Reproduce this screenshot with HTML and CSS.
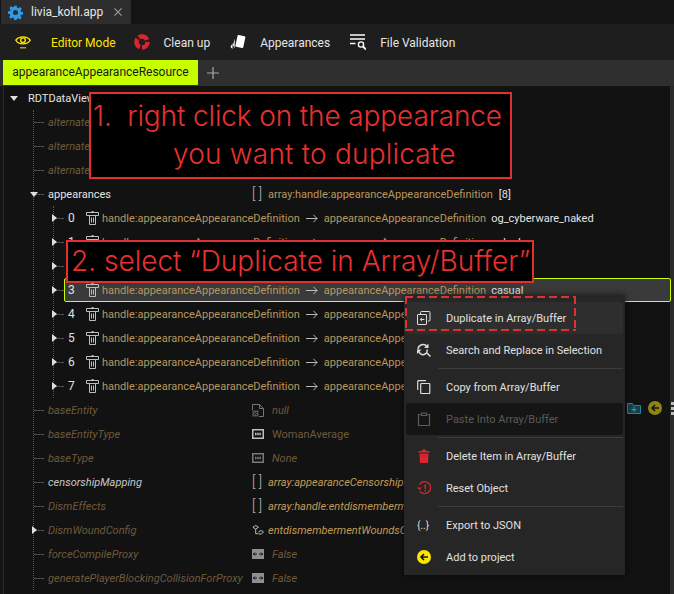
FILE: index.html
```html
<!DOCTYPE html>
<html lang="en">
<head>
  <meta charset="UTF-8" />
  <title>livia_kohl.app</title>
  <link rel="stylesheet" href="styles.css">
</head>
<body>
  <!-- window tab -->
  <div class="titlebar">
    <div class="filetab">
      <svg class="gear" width="15" height="15" viewBox="0 0 24 24"><path fill="#2f9be6" d="M10 1h4l.6 3.2 2 .8L19.300 3.200l2.800 2.800L20.200 8.700l.8 2 3 .3v4l-3.200.6-.8 2 1.800 2.700-2.800 2.800-2.700-1.800-2 .8L14 24h-4l-.6-3.200-2-.8-2.700 1.800-2.800-2.800 1.800-2.700-.8-2L0 14v-4l3.200-.6.8-2L2.200 4.700 5 1.900l2.700 1.800 2-.8zM12 8a4 4 0 1 0 0 8 4 4 0 0 0 0-8z"/></svg>
      <span>livia_kohl.app</span>
      <svg class="close" width="8" height="8" viewBox="0 0 9 9"><path d="M.5.500l8 8M8.500.500l-8 8" stroke="#9a9a9a" stroke-width="1.300"/></svg>
    </div>
  </div>

  <!-- toolbar -->
  <div class="toolbar">
    <div class="tool active">
      <svg width="16" height="16" viewBox="0 0 18 18"><path d="M1 7c3-5 13-5 16 0-3 5.500-13 5.500-16 0z" fill="none" stroke="#ffe600" stroke-width="1.600"/><circle cx="9" cy="7" r="2.600" fill="none" stroke="#ffe600" stroke-width="1.600"/><path d="M6 15.500h1.500M8.300 15.500h1.500M10.600 15.500h1.500" stroke="#ffe600" stroke-width="1.600"/></svg>
      <span>Editor Mode</span>
    </div>
    <div class="tool">
      <svg width="16" height="16" viewBox="0 0 16 16"><circle cx="8" cy="8" r="5.500" fill="none" stroke="#d9262e" stroke-width="4.500" stroke-dasharray="9.500 2.020" stroke-dashoffset="1"/></svg>
      <span>Clean up</span>
    </div>
    <div class="tool">
      <svg width="16" height="16" viewBox="0 0 16 16"><rect x="6.500" y="1.500" width="8" height="12" rx="1" transform="rotate(12 10 7)" fill="#fff"/><path d="M5 4.500L3 11l1.500 3.500zM2.500 9L.5 13l2 2z" fill="#fff"/></svg>
      <span>Appearances</span>
    </div>
    <div class="tool">
      <svg width="16" height="16" viewBox="0 0 16 16"><path d="M0 1h15M0 5h15M0 9.500h5.500" stroke="#fff" stroke-width="1.400"/><circle cx="11" cy="10.500" r="2.600" fill="none" stroke="#fff" stroke-width="1.400"/><path d="M13 12.500l3 3" stroke="#fff" stroke-width="1.800"/></svg>
      <span>File Validation</span>
    </div>
  </div>

  <!-- document tabs -->
  <div class="doctabs">
    <div class="doctab">appearanceAppearanceResource</div>
    <svg class="plus" width="12" height="12" viewBox="0 0 13 13"><path d="M6.500 0v13M0 6.500h13" stroke="#a8a8a8" stroke-width="1.300"/></svg>
  </div>

  <!-- data tree -->
  <div class="tree">
    <div class="row root"><span class="toggle down"></span><span class="name plain upright">RDTDataViewModel</span></div>
    <div class="children">
      <div class="row"><span class="dash"></span><span class="name">alternateAppearance</span></div>
      <div class="row"><span class="dash"></span><span class="name">alternateAppearance</span></div>
      <div class="row"><span class="dash"></span><span class="name">alternateAppearance</span></div>

      <div class="row"><span class="dash"><span class="toggle down"></span></span><span class="name plain upright">appearances</span>
        <span class="value"><span class="brackets">[ ]</span><span class="type upright">array:handle:appearanceAppearanceDefinition</span><span class="count">[8]</span></span>
      </div>
      <div class="children sub">
        <div class="row item"><span class="dash"><span class="toggle"></span></span><span class="idx">0</span><svg class="hicon" width="13" height="15" viewBox="0 0 13 15"><use href="#handle"/></svg><span class="type">handle:appearanceAppearanceDefinition</span><svg class="arrow" width="12" height="9" viewBox="0 0 13 9"><path d="M0 4.500h12M8 .5l4 4-4 4" fill="none" stroke="#c8c8c8"/></svg><span class="type">appearanceAppearanceDefinition</span><span class="label">og_cyberware_naked</span></div>
        <div class="row item"><span class="dash"><span class="toggle"></span></span><span class="idx">1</span><svg class="hicon" width="13" height="15" viewBox="0 0 13 15"><use href="#handle"/></svg><span class="type">handle:appearanceAppearanceDefinition</span><svg class="arrow" width="12" height="9" viewBox="0 0 13 9"><path d="M0 4.500h12M8 .5l4 4-4 4" fill="none" stroke="#c8c8c8"/></svg><span class="type">appearanceAppearanceDefinition</span><span class="label">naked</span></div>
        <div class="row item"><span class="dash"><span class="toggle"></span></span><span class="idx">2</span><svg class="hicon" width="13" height="15" viewBox="0 0 13 15"><use href="#handle"/></svg><span class="type">handle:appearanceAppearanceDefinition</span></div>
        <div class="row item selected"><span class="dash"><span class="toggle"></span></span><span class="idx">3</span><svg class="hicon" width="13" height="15" viewBox="0 0 13 15"><use href="#handle"/></svg><span class="type">handle:appearanceAppearanceDefinition</span><svg class="arrow" width="12" height="9" viewBox="0 0 13 9"><path d="M0 4.500h12M8 .5l4 4-4 4" fill="none" stroke="#c8c8c8"/></svg><span class="type">appearanceAppearanceDefinition</span><span class="label">casual</span></div>
        <div class="row item"><span class="dash"><span class="toggle"></span></span><span class="idx">4</span><svg class="hicon" width="13" height="15" viewBox="0 0 13 15"><use href="#handle"/></svg><span class="type">handle:appearanceAppearanceDefinition</span><svg class="arrow" width="12" height="9" viewBox="0 0 13 9"><path d="M0 4.500h12M8 .5l4 4-4 4" fill="none" stroke="#c8c8c8"/></svg><span class="type">appearanceAppearanceDefinition</span></div>
        <div class="row item"><span class="dash"><span class="toggle"></span></span><span class="idx">5</span><svg class="hicon" width="13" height="15" viewBox="0 0 13 15"><use href="#handle"/></svg><span class="type">handle:appearanceAppearanceDefinition</span><svg class="arrow" width="12" height="9" viewBox="0 0 13 9"><path d="M0 4.500h12M8 .5l4 4-4 4" fill="none" stroke="#c8c8c8"/></svg><span class="type">appearanceAppearanceDefinition</span></div>
        <div class="row item"><span class="dash"><span class="toggle"></span></span><span class="idx">6</span><svg class="hicon" width="13" height="15" viewBox="0 0 13 15"><use href="#handle"/></svg><span class="type">handle:appearanceAppearanceDefinition</span><svg class="arrow" width="12" height="9" viewBox="0 0 13 9"><path d="M0 4.500h12M8 .5l4 4-4 4" fill="none" stroke="#c8c8c8"/></svg><span class="type">appearanceAppearanceDefinition</span></div>
        <div class="row item"><span class="dash"><span class="toggle"></span></span><span class="idx">7</span><svg class="hicon" width="13" height="15" viewBox="0 0 13 15"><use href="#handle"/></svg><span class="type">handle:appearanceAppearanceDefinition</span><svg class="arrow" width="12" height="9" viewBox="0 0 13 9"><path d="M0 4.500h12M8 .5l4 4-4 4" fill="none" stroke="#c8c8c8"/></svg><span class="type">appearanceAppearanceDefinition</span></div>
      </div>

      <div class="row"><span class="dash"></span><span class="name">baseEntity</span>
        <span class="value"><svg class="vicon" width="12" height="13" viewBox="0 0 12 13"><path d="M.5 6V.5h7l4 4v8H7" fill="none" stroke="#777"/><path d="M7.500.5v4h4" fill="none" stroke="#777"/><rect x=".5" y="6.500" width="6" height="6" fill="#555"/><path d="M2 8l3 3M5 8l-3 3" stroke="#111"/></svg><span class="val">null</span></span>
      </div>
      <div class="row"><span class="dash"></span><span class="name">baseEntityType</span>
        <span class="value"><svg class="vicon" width="12" height="10" viewBox="0 0 12 10"><use href="#strbox" stroke="#c0c0c0"/></svg><span class="val upright">WomanAverage</span></span>
      </div>
      <div class="row"><span class="dash"></span><span class="name">baseType</span>
        <span class="value"><svg class="vicon" width="12" height="10" viewBox="0 0 12 10"><use href="#strbox" stroke="#7a7a7a"/></svg><span class="val">None</span></span>
      </div>
      <div class="row"><span class="dash"></span><span class="name bright">censorshipMapping</span>
        <span class="value"><span class="brackets">[ ]</span><span class="type strong">array:appearanceCensorshipEntry</span></span>
      </div>
      <div class="row"><span class="dash"></span><span class="name">DismEffects</span>
        <span class="value"><span class="brackets">[ ]</span><span class="type strong">array:handle:entdismembermentEffect</span></span>
      </div>
      <div class="row"><span class="dash"><span class="toggle"></span></span><span class="name">DismWoundConfig</span>
        <span class="value"><svg class="vicon near" width="12" height="13" viewBox="0 0 13 13"><path d="M1 3l3-2 3 2-3 2zM4 5v5h3M7 8l3-1.500L12.500 8 10 10.500 7.500 10" fill="none" stroke="#ccc"/></svg><span class="type strong">entdismembermentWoundsConfigSet</span></span>
      </div>
      <div class="row"><span class="dash"></span><span class="name">forceCompileProxy</span>
        <span class="value"><svg class="vicon" width="12" height="10" viewBox="0 0 12 10"><use href="#bool"/></svg><span class="val">False</span></span>
      </div>
      <div class="row"><span class="dash"></span><span class="name">generatePlayerBlockingCollisionForProxy</span>
        <span class="value"><svg class="vicon" width="12" height="10" viewBox="0 0 12 10"><use href="#bool"/></svg><span class="val">False</span></span>
      </div>
    </div>
    <div class="rowtools">
      <svg width="14" height="12" viewBox="0 0 14 12"><path d="M.5 1.500h5l1 2h7v8H.5z" fill="#12424a" stroke="#1f8a96"/><path d="M7 5v5M4.500 7.500h5" stroke="#2aa5b3"/></svg>
      <svg width="14" height="14" viewBox="0 0 14 14"><circle cx="7" cy="7" r="7" fill="#8f8510"/><path d="M11 7H4M7 4L4 7l3 3" fill="none" stroke="#141414" stroke-width="1.600"/></svg>
      <span class="dots"></span>
    </div>
  </div>

  <!-- context menu -->
  <div class="menu">
    <div class="mi hot"><svg width="14" height="14" viewBox="0 0 14 14"><path d="M3.500 3V1.500a1 1 0 0 1 1-1H12a1 1 0 0 1 1 1V9a1 1 0 0 1-1 1h-1M1 3.500h8a.500.500 0 0 1 .5.500v9a.500.500 0 0 1-.5.500H1a.500.500 0 0 1-.5-.5V4a.500.500 0 0 1 .5-.5zM7.500 8.500h-4M5 6.800L3.300 8.500 5 10.200" fill="none" stroke="#ddd"/></svg><span>Duplicate in Array/Buffer</span></div>
    <div class="mi"><svg width="14" height="14" viewBox="0 0 14 14"><path d="M1 6a5 5 0 0 1 9-2.500M10 6.500a4 4 0 0 1-8 2M9.500 9.500L13.500 13.500" fill="none" stroke="#ddd" stroke-width="1.500"/><path d="M11.500.500v4.500H7zM0 6.500h4.500L0 11z" fill="#ddd"/></svg><span>Search and Replace in Selection</span></div>
    <div class="sep"></div>
    <div class="mi"><svg width="14" height="14" viewBox="0 0 14 14"><path d="M.7 10V1.500a.8.800 0 0 1 .8-.8H9M4.500 3.500H12a.8.800 0 0 1 .8.800v8.500a.8.800 0 0 1-.8.800H4.500a.8.800 0 0 1-.8-.8V4.300a.8.800 0 0 1 .8-.8z" fill="none" stroke="#ddd" stroke-width="1.200"/></svg><span>Copy from Array/Buffer</span></div>
    <div class="mi disabled"><svg width="14" height="14" viewBox="0 0 14 14"><path d="M3.500 2.500h-2v11h11v-11h-2M4.500 1h5v2.500h-5z" fill="none" stroke="#5e5e5e" stroke-width="1.200"/></svg><span>Paste Into Array/Buffer</span></div>
    <div class="sep"></div>
    <div class="mi"><svg width="14" height="14" viewBox="0 0 14 14"><path d="M1.500 2h11v1.500h-11zM5 .5h4V2H5zM2.500 4.500h9l-.5 9.500H3z" fill="#d9262e"/></svg><span>Delete Item in Array/Buffer</span></div>
    <div class="mi"><svg width="14" height="14" viewBox="0 0 14 14"><path d="M2.500 3.500A6 6 0 1 1 3 10.500" fill="none" stroke="#d9262e" stroke-width="1.300"/><path d="M0 6.500h5L2.500 9zM7.500 3.500h1.500v4.500H7.500zM7.500 9h1.500v1.500H7.500z" fill="#d9262e"/></svg><span>Reset Object</span></div>
    <div class="sep"></div>
    <div class="mi"><span class="jsonicon">{..}</span><span>Export to JSON</span></div>
    <div class="mi"><svg width="14" height="14" viewBox="0 0 14 14"><circle cx="7" cy="7" r="7" fill="#ffe600"/><path d="M11 7H4M7 4L4 7l3 3" fill="none" stroke="#141414" stroke-width="1.600"/></svg><span>Add to project</span></div>
  </div>

  <!-- annotations -->
  <div class="note note1">
    <div class="first">1.&nbsp; right click on the appearance</div>
    <div class="second">you want to duplicate</div>
  </div>
  <div class="note note2">2. select “Duplicate in Array/Buffer”</div>
  <div class="dashbox"></div>

  <svg width="0" height="0" class="defs">
    <defs>
      <g id="handle" fill="none" stroke="#bdbdbd"><path d="M.5 1.500h12v3H.5zM3.500 4.500v9h6v-9M5.500 6.500v5M7.500 6.500v5M5.500.5h2"/></g>
      <g id="bool"><rect width="12" height="10" fill="#8f8f8f"/><path d="M1 5h4M3 3.500L1.500 5 3 6.500M11 5H7M9 3.500L10.500 5 9 6.500" fill="none" stroke="#141414"/></g>
      <g id="strbox" fill="none"><rect x=".75" y=".75" width="10.500" height="8.500" stroke-width="1.500"/><path d="M3 5h6" stroke-width="2.500" stroke-dasharray="1.500 .7"/></g>
    </defs>
  </svg>
</body>
</html>
```

FILE: styles.css
```css
* {
  box-sizing: border-box;
}

html, body {
  height: 100%;
}

body {
  margin: 0;
  position: relative;
  display: flex;
  flex-direction: column;
  overflow: hidden;
  background-color: #141414;
  font-family: 'Roboto', sans-serif;
  font-size: 11px;
  color: #e6e6e6;
}

.titlebar {
  height: 24px;
  padding-left: 1px;
  background-color: #141414;
  flex-shrink: 0;
}

.filetab {
  display: flex;
  align-items: center;
  width: 130px;
  height: 24px;
  padding-left: 7px;
  background-color: #2d2d2d;
  font-size: 12px;
}

.filetab span {
  margin-left: 8px;
}

.filetab .close {
  margin-left: 11px;
}

.toolbar {
  display: flex;
  align-items: center;
  height: 36px;
  padding-left: 15px;
  background-color: #1e1e1e;
  flex-shrink: 0;
  font-size: 12px;
}

.tool {
  display: flex;
  align-items: center;
  gap: 14px;
  margin-right: 20px;
}

.tool span {
  margin-top: 2px;
}

.tool.active {
  gap: 20px;
  margin-right: 18px;
}

.tool.active span {
  color: #ffe600;
}

.doctabs {
  display: flex;
  align-items: flex-start;
  height: 26px;
  padding-left: 3px;
  background-color: #2f2f2f;
  flex-shrink: 0;
}

.doctab {
  height: 25px;
  line-height: 25px;
  width: 195px;
  text-align: center;
  background-color: #c8ff00;
  color: #1a1a1a;
  font-size: 12px;
}

.plus {
  margin: 7px 0 0 9px;
}

.tree {
  position: relative;
  z-index: 0;
  flex: 1;
  margin-left: 3px;
  background-color: #121212;
  border-left: 1px solid #2a2a2a;
  border-right: 4px solid #2a2a2a;
}

.row {
  position: relative;
  display: flex;
  align-items: center;
  height: 24px;
  white-space: nowrap;
}

.root {
  padding-left: 6px;
}

.root .name {
  width: auto;
  margin-left: 10px;
}

.children {
  margin-left: 29px;
  border-left: 1px dotted #555;
}

.children.sub {
  margin-left: 19px;
}

.dash {
  position: relative;
  width: 10px;
  margin-right: 4px;
  border-top: 1px dashed #555;
  flex-shrink: 0;
}

.toggle {
  display: inline-block;
  width: 0;
  height: 0;
  border-top: 4px solid transparent;
  border-bottom: 4px solid transparent;
  border-left: 5px solid #ddd;
}

.dash .toggle {
  position: absolute;
  left: -2px;
  top: -5px;
}

.toggle.down {
  border-left: 4px solid transparent;
  border-right: 4px solid transparent;
  border-top: 5px solid #ddd;
  border-bottom: 0;
}

.dash .toggle.down {
  left: -4px;
  top: -3px;
}

.name {
  width: 204px;
  flex-shrink: 0;
  font-style: italic;
  color: #6f5a3a;
}

.name.plain {
  color: #e4e4e4;
}

.name.bright {
  color: #c8c8c8;
}

.name.upright, .upright {
  font-style: normal;
}

.value {
  display: flex;
  align-items: center;
}

.brackets {
  width: 14px;
  margin-right: 2px;
  font-size: 14px;
  font-weight: 300;
  color: #bbb;
  white-space: pre;
}

.type {
  color: #b8975f;
}

.type.strong {
  font-style: italic;
  color: #c79a55;
}

.count {
  margin-left: 6px;
  color: #e0e0e0;
}

.vicon {
  margin-right: 8px;
}

.vicon.near {
  margin-right: 4px;
}

.val {
  font-style: italic;
  color: #6f5a3a;
}

.val.upright {
  font-style: normal;
}

.idx {
  width: 18px;
  color: #e0e0e0;
  font-size: 12px;
}

.hicon {
  margin-right: 3px;
}

.arrow {
  margin: 0 6px;
}

.label {
  margin-left: 5px;
  color: #e4e4e4;
}

/* selection box starts after the expander */
.item.selected::before {
  content: "";
  position: absolute;
  z-index: -1;
  top: 0;
  bottom: 0;
  left: 10px;
  width: 605px;
  background-color: #3a3a3a;
  border: 1px solid #c8ff00;
  border-radius: 2px;
}

.rowtools {
  position: absolute;
  top: 315px;
  left: 623px;
  display: flex;
  align-items: center;
  gap: 7px;
}

.dots {
  width: 3px;
  height: 13px;
  margin-left: 2px;
  background: repeating-linear-gradient(#bbb 0 3px, transparent 3px 5px);
}

.menu {
  position: absolute;
  left: 404px;
  top: 295px;
  width: 221px;
  height: 280px;
  padding: 7px 2px 2px 2px;
  background-color: #262626;
  box-shadow: 0 0 6px rgba(0, 0, 0, 0.6);
}

.mi {
  display: flex;
  align-items: center;
  height: 32px;
  padding-left: 11px;
  border-radius: 3px;
  color: #e0e0e0;
}

.mi span:last-child {
  margin-left: 15px;
}

.mi.hot {
  background-color: #2e2e2e;
}

.mi.disabled {
  background-color: #151515;
  color: #5a5a5a;
}

.sep {
  height: 1px;
  margin: 2px 0 2px 32px;
  background-color: #3c3c3c;
}

.jsonicon {
  width: 14px;
  font-size: 10px;
  color: #ddd;
  white-space: nowrap;
}

.note {
  position: absolute;
  background-color: #000;
  border: 2px solid #e03030;
  color: #e83030;
  font-family: 'Inter', sans-serif;
  font-weight: 300;
  white-space: nowrap;
}

.note1 {
  left: 89px;
  top: 92px;
  width: 423px;
  height: 87px;
  padding: 3px 0 0 2px;
  font-size: 28px;
  line-height: 38px;
}

.note1 .first {
  letter-spacing: -0.12px;
}

.note1 .second {
  padding-left: 80px;
  letter-spacing: 0.2px;
}

.note2 {
  left: 66px;
  top: 240px;
  width: 468px;
  height: 43px;
  padding-left: 3px;
  font-size: 28px;
  line-height: 38px;
}

/* long dashes, a css dashed border draws them too short */
.dashbox {
  position: absolute;
  left: 405px;
  top: 296px;
  width: 171px;
  height: 35px;
  background:
    repeating-linear-gradient(90deg, #e03030 0 8px, transparent 8px 12px) top / 100% 2px no-repeat,
    repeating-linear-gradient(90deg, #e03030 0 8px, transparent 8px 12px) bottom / 100% 2px no-repeat,
    repeating-linear-gradient(#e03030 0 8px, transparent 8px 12px) left / 2px 100% no-repeat,
    repeating-linear-gradient(#e03030 0 8px, transparent 8px 12px) right / 2px 100% no-repeat;
}

.defs {
  position: absolute;
}
```
